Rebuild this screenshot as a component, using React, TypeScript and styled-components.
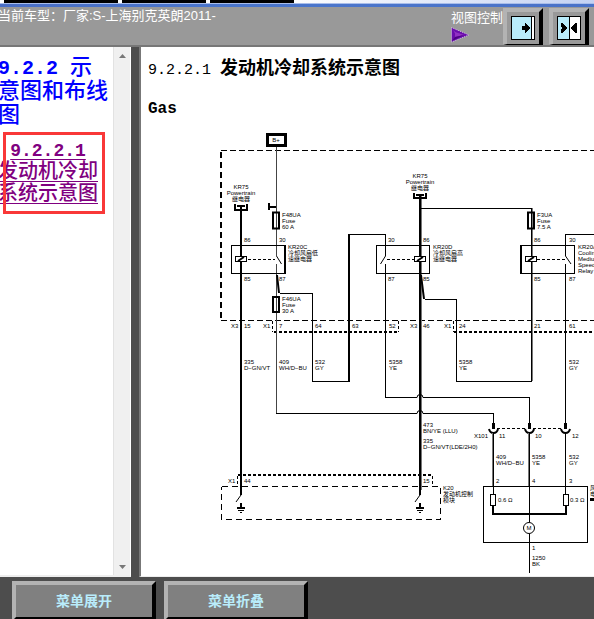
import React from "react";
import styled, { createGlobalStyle } from "styled-components";

const GlobalStyle = createGlobalStyle`
  *, *::before, *::after { box-sizing: border-box; }
  body { margin: 0; background: #4d4d4d; }
`;

const sans = `"Liberation Sans", "Noto Sans CJK SC", sans-serif`;
const mono = `"Liberation Mono", "Noto Sans CJK SC", monospace`;

const Page = styled.div`
  display: flex;
  flex-direction: column;
  height: 100vh;
  overflow: hidden;
  background: #4d4d4d;
  font-family: ${sans};
`;

const TabStrip = styled.div`
  display: flex;
  flex: none;
  gap: 4px;
  height: 3px;
  padding-left: 4px;
  background: linear-gradient(90deg, #ffffff 48%, #c4d2f3);
`;

const TabEdge = styled.div<{ $wide?: boolean }>`
  flex: none;
  width: ${(p) => (p.$wide ? 114 : 84)}px;
  background: #000;
`;

const TitleLine = styled.div`
  flex: none;
  height: 4px;
  border-top: 1px solid #a9bdea;
  background: linear-gradient(90deg, #4a6fc6, #4a76cc 40%, #4a72c8);
`;

const Header = styled.header`
  display: flex;
  flex: none;
  justify-content: space-between;
  height: 40px;
  background: #999;
  border-bottom: 2px solid #777;
  color: #fff;
  font-size: 13px;
  line-height: 18px;
  overflow: hidden;
`;

const Vehicle = styled.div`
  margin-left: -2px;
  white-space: nowrap;
`;

const ViewTools = styled.div`
  display: flex;
  flex: none;
  gap: 6px;
  padding: 1px 5px 0 0;
`;

const ViewLabel = styled.div`
  display: flex;
  flex-direction: column;
  width: 52px;
  margin-right: -6px;
  padding-top: 1px;
  white-space: nowrap;
`;

const BevelButton = styled.button`
  flex: none;
  padding: 0;
  border: 4px solid;
  border-color: #b3b3b3 #000 #000 #b3b3b3;
  border-radius: 0;
  background: #808080;
  cursor: pointer;
`;

const IconButton = styled(BevelButton)`
  display: flex;
  align-items: center;
  justify-content: center;
  width: 40px;
  height: 37px;
  border-bottom-width: 1px;
  background: #999;
`;

const MenuButton = styled(BevelButton)`
  width: 144px;
  height: 40px;
  padding-bottom: 2px;
  color: #b9ecfb;
  font: bold 14px ${sans};
`;

const Workspace = styled.div`
  display: flex;
  flex: 1;
  min-height: 0;
  gap: 8px;
`;

const Sidebar = styled.aside`
  display: flex;
  flex: none;
  width: 131px;
  background: #fff;
  border-right: 1px solid #fff;
  border-bottom: 2px solid #eee;
`;

const Nav = styled.nav`
  flex: 1;
  min-width: 0;
  padding-top: 10px;
  overflow: hidden;
  font-family: ${mono};
  font-weight: 500;
`;

const Section = styled.h2`
  margin: 0 0 0 -2px;
  color: #0000ff;
  font-size: 22px;
  line-height: 24px;
  font-weight: 500;
`;

const Digits = styled.span<{ $size: number }>`
  font-size: ${(p) => p.$size}px;
  font-weight: bold;
`;

const Entry = styled.div`
  position: relative;
  width: 105px;
  margin-top: 3px;
  padding: 8px 7px 8px 0;
  text-align: center;
`;

const EntryLink = styled.a`
  display: block;
  margin-left: -2px;
  color: #800080;
  font-size: 20px;
  line-height: 22px;
  text-underline-offset: 3px;
  text-decoration-thickness: 1px;
  text-decoration-skip-ink: none;
`;

const Highlight = styled.div`
  position: absolute;
  inset: 0 0 0 3px;
  border: 3px solid #f93838;
  pointer-events: none;
`;

const ScrollTrack = styled.div`
  display: flex;
  flex: none;
  flex-direction: column;
  justify-content: space-between;
  width: 17px;
  background: #f0f0f0;
  border-left: 1px solid #e2e2e2;
`;

const ScrollArrow = styled.button`
  display: flex;
  align-items: center;
  justify-content: center;
  height: 17px;
  padding: 0;
  border: 0;
  background: transparent;
`;

const Document = styled.main`
  flex: 1;
  min-width: 0;
  padding: 10px 0 0 7px;
  overflow: hidden;
  background: #fff;
  border-left: 2px solid #777;
  border-bottom: 1px solid #eee;
  color: #000;
  font-family: ${mono};
`;

const Heading = styled.h1`
  margin: 0;
  font-size: 18px;
  line-height: 24px;
  font-weight: bold;
  white-space: nowrap;
`;

const HeadingNumber = styled.span`
  font-size: 15px;
  font-weight: normal;
`;

const Fuel = styled.h3`
  margin: 16px 0 11px;
  font-size: 16px;
  line-height: 20px;
`;

const Diagram = styled.svg`
  display: block;
  margin-left: 67px;
  font-family: ${sans};
  font-size: 6px;
`;

const Footer = styled.footer`
  display: flex;
  flex: none;
  gap: 8px;
  height: 42px;
  padding: 4px 12px 0;
  overflow: hidden;
`;

function ExpandIcon() {
  return (
    <svg width="24" height="24" viewBox="0 0 24 24" shapeRendering="crispEdges">
      <path fill="#000" d="M0 0h24v24H0z" />
      <path fill="#b9ecfb" d="M1 1h19v22H1z" />
      <path fill="#fff" d="M21 1h2v22h-2z" />
      <path fill="#000" d="M11 10h3V7h1v1h1v1h1v1h1v1h1v2h-1v1h-1v1h-1v1h-1v1h-1v-3h-3z" />
    </svg>
  );
}

function SplitIcon() {
  return (
    <svg width="24" height="24" viewBox="0 0 24 24" shapeRendering="crispEdges">
      <path fill="#000" d="M0 0h24v24H0z" />
      <path fill="#b9ecfb" d="M1 1h11v22H1z" />
      <path fill="#fff" d="M13 1h10v22H13z" />
      <path fill="#000" d="M4 7h2v1h1v1h1v1h1v1h1v2H9v1H8v1H7v1H6v1H4v-4h1v-2H4zM20 7v10h-2v-1h-1v-1h-1v-1h-1v-1h-1v-2h1v-1h1V9h1V8h1V7z" />
    </svg>
  );
}

function Label({ x, y, lines, center }: { x: number; y: number; lines: string[]; center?: boolean }) {
  return (
    <text x={x} y={y} textAnchor={center ? "middle" : "start"}>
      {lines.map((line, i) => (
        <tspan key={i} x={x} dy={i ? 6 : 0}>
          {line}
        </tspan>
      ))}
    </text>
  );
}

const labels: [number, number, string[], boolean?][] = [
  [276, 142, ["B+"], true],
  [241, 189, ["KR75", "Powertrain", "继电器"], true],
  [420, 178, ["KR75", "Powertrain", "继电器"], true],
  [282, 217, ["F48UA", "Fuse", "60 A"]],
  [537, 217, ["F3UA", "Fuse", "7.5 A"]],
  [282, 301, ["F46UA", "Fuse", "30 A"]],
  [288, 249, ["KR20C", "冷却风扇低", "速继电器"]],
  [433, 249, ["KR20D", "冷却风扇高", "速继电器"]],
  [578, 249, ["KR20A", "Cooling", "Medium", "Speed", "Relay"]],
  [244, 242, ["86"]], [279, 242, ["30"]], [244, 281, ["85"]], [279, 281, ["87"]],
  [388, 242, ["30"]], [423, 242, ["86"]], [388, 281, ["87"]], [423, 281, ["85"]],
  [534, 242, ["86"]], [569, 242, ["30"]], [534, 281, ["85"]], [569, 281, ["87"]],
  [231, 328, ["X3"]], [244, 328, ["15"]], [263, 328, ["X1"]], [279, 328, ["7"]],
  [315, 328, ["64"]], [352, 328, ["63"]], [389, 328, ["52"]], [410, 328, ["X3"]],
  [423, 328, ["46"]], [444, 328, ["X1"]], [459, 328, ["24"]], [534, 328, ["21"]], [569, 328, ["61"]],
  [244, 364, ["335", "D−GN/VT"]],
  [279, 364, ["409", "WH/D−BU"]],
  [315, 364, ["532", "GY"]],
  [389, 364, ["5358", "YE"]],
  [459, 364, ["5358", "YE"]],
  [569, 364, ["532", "GY"]],
  [423, 427, ["473", "BN/YE (LLU)"]],
  [423, 443, ["335", "D−GN/VT(LDE/2H0)"]],
  [474, 438, ["X101"]], [499, 438, ["11"]], [535, 438, ["10"]], [572, 438, ["12"]],
  [496, 459, ["409", "WH/D−BU"]],
  [532, 459, ["5358", "YE"]],
  [569, 459, ["532", "GY"]],
  [496, 483, ["2"]], [532, 483, ["4"]], [569, 483, ["3"]],
  [228, 483, ["X1"]], [244, 483, ["44"]], [423, 483, ["15"]],
  [443, 490, ["K20", "发动机控制", "模块"]],
  [498, 502, ["0.6 Ω"]], [570, 502, ["0.3 Ω"]],
  [529, 530, ["M"], true],
  [532, 550, ["1"]], [532, 560, ["1250", "BK"]],
  [590, 490, ["风扇", "电机"]],
];

function WiringDiagram() {
  return (
    <Diagram width="385" height="445" viewBox="215 130 385 445" role="img" aria-label="发动机冷却系统示意图">
      <g fill="none" stroke="#000" shapeRendering="crispEdges">
        {/* Supply terminal and enclosures */}
        <rect x="267.5" y="134.5" width="18" height="11" strokeWidth="3" />
        <path strokeDasharray="6 3" d="M221 150.5H600M221 320.5H600" />
        <path strokeWidth="2" strokeDasharray="6 4" d="M221 152V321" />
        <path strokeDasharray="6 4" d="M221.5 486.5H440V519.5H221.5V486.5" />
        <path strokeWidth="2" strokeDasharray="3 2" d="M274 332H398M454 332H600M238 475H432" />
        <path strokeDasharray="3 2" d="M272.5 321V332M398.5 321V332M453.5 321V332M237.5 476V486M432.5 476V486M497 428.5H526M533 428.5H562" />

        {/* Supply wires */}
        <path strokeWidth="2" d="M241 205V495M420 195V495" />
        <path stroke="#444" d="M276.5 147V256M276.5 264V413" />
        <path stroke="#777" d="M421.5 195V490M532.5 208V381" />
        <path strokeWidth="2" d="M235 204V210H247V204M237 206H245M414 193V198H426V193M416 195H424" />
        <path strokeWidth="2" d="M269 203V210M269 207H276" />

        {/* Conductors */}
        <path d="M420 208.5H531.5V381.5H456.5V299.5H424.5" />
        <path d="M279.5 293.5H312.5V381.5H348" />
        <path strokeWidth="2" d="M349 382V234" />
        <path d="M348 234.5H385.5V256M385.5 264V397.5H417M423 397.5H529.5V428" />
        <path d="M276 413.5H417M423 413.5H493.5V428M600 234.5H565.5V256M565.5 264V428" />

        {/* Relays */}
        <rect x="231.5" y="245.5" width="53" height="28" />
        <rect x="376.5" y="245.5" width="53" height="28" />
        <rect x="521.5" y="245.5" width="53" height="28" />
        <path d="M285.5 245V274M520.5 245V274" />
        <path strokeDasharray="3 2" d="M248 259.5H275M387 259.5H414M537 259.5H565" />
      </g>

      <g fill="#fff" stroke="#000">
        <rect x="235.5" y="256.5" width="11" height="5" />
        <rect x="414.5" y="256.5" width="11" height="5" />
        <rect x="525.5" y="256.5" width="11" height="5" />
        <rect x="490.5" y="494.5" width="5" height="11" />
        <rect x="563.5" y="494.5" width="5" height="11" />
      </g>
      <g fill="none" stroke="#000">
        <path strokeWidth="2" d="M238 261L244 257M417 261L423 257M528 261L534 257" />
        <path d="M276.5 256L281.5 264M385.5 256L380.5 264M565.5 256L571 264" />
        <path strokeWidth="2" d="M277 275L279 293M421 275L424 299" />
        <path d="M417 397.5L418 395H422L423 397.5M417 413.5L418 411H422L423 413.5" />
        <rect x="273" y="212.5" width="6" height="16" strokeWidth="2" />
        <rect x="273" y="297" width="6" height="15" strokeWidth="2" />
        <rect x="528" y="212.5" width="6" height="16" strokeWidth="2" />

        {/* Connector X101 */}
        <path strokeWidth="3" d="M493.5 423V429M529.5 423V429M565.5 423V429" />
        <path strokeWidth="2" d="M489 429Q490 433 493.5 433Q497 433 498 429M525 429Q526 433 529.5 433Q533 433 534 429M561 429Q562 433 565.5 433Q569 433 570 429" />
      </g>

      {/* Fan motor and module grounds */}
      <g fill="none" stroke="#000" shapeRendering="crispEdges">
        <path d="M493.5 433V494M565.5 433V494M529.5 433V522M529.5 534V573" />
        <path stroke="#777" d="M492.5 433V486M528.5 433V486" />
        <path d="M483.5 486.5H587.5V542.5H483.5Z" />
        <path strokeWidth="2" d="M493 506V514H566V506" />
        <path strokeWidth="2" d="M241 503V507M420 503V507M237 508H245M416 508H424" />
        <path d="M238 510.5H244M417 510.5H423M240 512.5H242M419 512.5H421" />
        <path strokeWidth="3" d="M590 499.5H600" />
      </g>
      <g fill="none" stroke="#000">
        <path d="M241 495L236 502M420 495L415 502" />
        <circle cx="529" cy="528" r="5.5" fill="#fff" />
      </g>
      {labels.map(([x, y, lines, center], i) => (
        <Label key={i} x={x} y={y} lines={lines} center={center} />
      ))}
    </Diagram>
  );
}

export default function App() {
  return (
    <Page>
      <GlobalStyle />
      <TabStrip>
        <TabEdge $wide />
        <TabEdge />
        <TabEdge />
      </TabStrip>
      <TitleLine />
      <Header>
        <Vehicle>当前车型：厂家:S-上海别克英朗2011-</Vehicle>
        <ViewTools>
          <ViewLabel>
            视图控制
            <svg width="19" height="16" viewBox="0 0 19 16">
              <path fill="#6a0dad" stroke="#d9c4e8" strokeDasharray="1 1" d="M.5.5v14.5L18 8z" />
              <path fill="#a646d8" d="M2 3l3 3 9 2-10-2z" />
              <path fill="#9230c4" d="M4 5l9 3-9 2z" />
              <path fill="#4b0082" d="M1 14l3-4 9-2z" />
            </svg>
          </ViewLabel>
          <IconButton type="button" aria-label="展开视图">
            <ExpandIcon />
          </IconButton>
          <IconButton type="button" aria-label="分栏视图">
            <SplitIcon />
          </IconButton>
        </ViewTools>
      </Header>
      <Workspace>
        <Sidebar>
          <Nav>
            <Section>
              <Digits $size={20}>9.2.2 </Digits>示意图和布线图
            </Section>
            <Entry>
              <EntryLink href="#cooling">
                <Digits $size={18}>9.2.2.1</Digits>
                <br />
                发动机冷却系统示意图
              </EntryLink>
              <Highlight />
            </Entry>
          </Nav>
          <ScrollTrack>
            <ScrollArrow type="button" aria-label="向上滚动">
              <svg width="7" height="4" viewBox="0 0 7 4"><path fill="#777" d="M3.5 0L7 4H0z" /></svg>
            </ScrollArrow>
            <ScrollArrow type="button" aria-label="向下滚动">
              <svg width="7" height="4" viewBox="0 0 7 4"><path fill="#777" d="M0 0h7L3.5 4z" /></svg>
            </ScrollArrow>
          </ScrollTrack>
        </Sidebar>
        <Document id="cooling">
          <Heading>
            <HeadingNumber>9.2.2.1 </HeadingNumber>发动机冷却系统示意图
          </Heading>
          <Fuel>Gas</Fuel>
          <WiringDiagram />
        </Document>
      </Workspace>
      <Footer>
        <MenuButton type="button">菜单展开</MenuButton>
        <MenuButton type="button">菜单折叠</MenuButton>
      </Footer>
    </Page>
  );
}
